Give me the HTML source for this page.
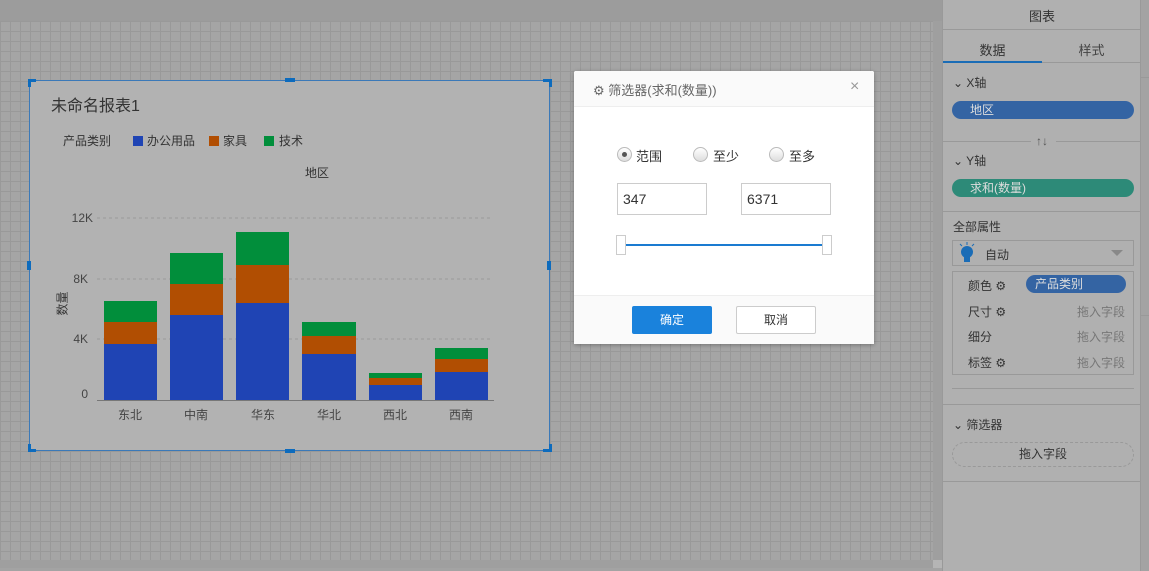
<!DOCTYPE html>
<html><head><meta charset="utf-8"><style>
*{margin:0;padding:0;box-sizing:border-box}
body{width:1149px;height:571px;overflow:hidden;background:#a3a3a3;font-family:"Liberation Sans","Noto Sans CJK SC",sans-serif;position:relative;color:#333}
.a{position:absolute}
#top{left:0;top:0;width:942px;height:21px;background:#9c9c9c}
#canvas{left:0;top:21px;width:933px;height:539px;background-color:#a5a5a5;background-image:linear-gradient(#999 1px,transparent 1px),linear-gradient(90deg,#999 1px,transparent 1px);background-size:10px 10px;background-position:0 0}
#vs{left:933px;top:21px;width:9px;height:547px;background:#9f9f9f}
#hs{left:0;top:560px;width:933px;height:8px;background:#9f9f9f}
#chart{left:29px;top:80px;width:521px;height:371px;background:#b2b2b2;border:1px solid #3b79b8}
.h{background:#0d6bbd;position:absolute}
.t{position:absolute;font-size:12px;color:#333;white-space:nowrap}
#side{left:942px;top:0;width:199px;height:571px;background:#b0b0b0;border-left:1px solid #999;border-right:1px solid #999}
.ln{position:absolute;height:1px;background:#999}
.pill{position:absolute;border-radius:10px;color:#ddd;font-size:12px;padding-left:18px;line-height:18px}
#dlg{left:574px;top:71px;width:300px;height:273px;background:#fff;border-radius:2px;box-shadow:0 1px 4px rgba(0,0,0,.3)}
.radio{position:absolute;width:15px;height:15px;border-radius:50%;border:1px solid #bbb;background:linear-gradient(#fff,#ddd)}
.inp{position:absolute;border:1px solid #ccc;width:90px;height:32px;font-size:14px;padding:7px 5px;color:#333}
</style></head><body>
<div id="top" class="a"></div>
<div id="canvas" class="a"></div>
<div id="vs" class="a"></div>
<div id="hs" class="a"></div>
<div class="a" style="left:933px;top:560px;width:9px;height:8px;background:#b5b5b5"></div>

<div id="chart" class="a">
<div class="t" style="left:21px;top:11px;font-size:16px">未命名报表1</div>
<div class="t" style="left:33px;top:51px">产品类别</div>
<div class="a" style="left:103px;top:55px;width:10px;height:10px;background:#1f44b4"></div>
<div class="t" style="left:117px;top:51px">办公用品</div>
<div class="a" style="left:179px;top:55px;width:10px;height:10px;background:#b14e02"></div>
<div class="t" style="left:193px;top:51px">家具</div>
<div class="a" style="left:234px;top:55px;width:10px;height:10px;background:#018e3b"></div>
<div class="t" style="left:249px;top:51px">技术</div>
<div class="t" style="left:275px;top:83px">地区</div>
<div class="t" style="left:20px;top:214px;transform:rotate(-90deg)">数量</div>
</div>
<div class="h" style="left:28px;top:79px;width:8px;height:3px"></div><div class="h" style="left:28px;top:79px;width:3px;height:8px"></div>
<div class="h" style="left:543px;top:79px;width:9px;height:3px"></div><div class="h" style="left:549px;top:79px;width:3px;height:8px"></div>
<div class="h" style="left:28px;top:449px;width:8px;height:3px"></div><div class="h" style="left:28px;top:444px;width:3px;height:8px"></div>
<div class="h" style="left:543px;top:449px;width:9px;height:3px"></div><div class="h" style="left:549px;top:444px;width:3px;height:8px"></div>
<div class="h" style="left:285px;top:78px;width:10px;height:4px"></div><div class="h" style="left:285px;top:449px;width:10px;height:4px"></div>
<div class="h" style="left:27px;top:261px;width:4px;height:9px"></div><div class="h" style="left:547px;top:261px;width:4px;height:9px"></div>

<svg class="a" style="left:0;top:0" width="560" height="460">
<g stroke="#9a9a9a" stroke-dasharray="3,3"><line x1="97" y1="218" x2="493" y2="218"/><line x1="97" y1="279" x2="493" y2="279"/><line x1="97" y1="339" x2="493" y2="339"/></g>
<g font-size="12" fill="#444" text-anchor="end" font-family="Liberation Sans"><text x="93" y="222">12K</text><text x="88" y="283">8K</text><text x="88" y="343">4K</text><text x="88" y="398">0</text></g>
<g>
<rect x="104" y="301" width="53" height="21" fill="#018e3b"/><rect x="104" y="322" width="53" height="22" fill="#b14e02"/><rect x="104" y="344" width="53" height="56" fill="#1f44b4"/>
<rect x="170" y="253" width="53" height="31" fill="#018e3b"/><rect x="170" y="284" width="53" height="31" fill="#b14e02"/><rect x="170" y="315" width="53" height="85" fill="#1f44b4"/>
<rect x="236" y="232" width="53" height="33" fill="#018e3b"/><rect x="236" y="265" width="53" height="38" fill="#b14e02"/><rect x="236" y="303" width="53" height="97" fill="#1f44b4"/>
<rect x="302" y="322" width="54" height="14" fill="#018e3b"/><rect x="302" y="336" width="54" height="18" fill="#b14e02"/><rect x="302" y="354" width="54" height="46" fill="#1f44b4"/>
<rect x="369" y="373" width="53" height="5" fill="#018e3b"/><rect x="369" y="378" width="53" height="7" fill="#b14e02"/><rect x="369" y="385" width="53" height="15" fill="#1f44b4"/>
<rect x="435" y="348" width="53" height="11" fill="#018e3b"/><rect x="435" y="359" width="53" height="13" fill="#b14e02"/><rect x="435" y="372" width="53" height="28" fill="#1f44b4"/>
</g>
<line x1="97" y1="400.5" x2="494" y2="400.5" stroke="#777"/>
<g font-size="12" fill="#444" text-anchor="middle" font-family="Liberation Sans,Noto Sans CJK SC"><text x="130" y="419">东北</text><text x="196" y="419">中南</text><text x="263" y="419">华东</text><text x="329" y="419">华北</text><text x="395" y="419">西北</text><text x="461" y="419">西南</text></g>
</svg>

<div id="side" class="a">
<div class="t" style="left:0;width:198px;text-align:center;top:6px;font-size:13px">图表</div>
<div class="ln" style="left:0;top:29px;width:198px"></div>
<div class="t" style="left:0;width:99px;text-align:center;top:40px;font-size:13px">数据</div>
<div class="t" style="left:99px;width:99px;text-align:center;top:40px;font-size:13px;color:#444">样式</div>
<div class="ln" style="left:0;top:62px;width:198px"></div>
<div class="a" style="left:0;top:61px;width:99px;height:2px;background:#1a6cb6"></div>
<div class="t" style="left:10px;top:74px">⌄ X轴</div>
<div class="pill" style="left:9px;top:101px;width:182px;background:#3464a3">地区</div>
<div class="ln" style="left:0;top:141px;width:88px"></div><div class="ln" style="left:113px;top:141px;width:85px"></div>
<div class="t" style="left:93px;top:134px;color:#555">↑↓</div>
<div class="t" style="left:10px;top:152px">⌄ Y轴</div>
<div class="pill" style="left:9px;top:179px;width:182px;background:#2d8a78">求和(数量)</div>
<div class="ln" style="left:0;top:211px;width:198px"></div>
<div class="t" style="left:10px;top:218px">全部属性</div>
<div class="a" style="left:9px;top:240px;width:182px;height:26px;border:1px solid #999"></div>
<svg class="a" style="left:15px;top:242px" width="20" height="22"><circle cx="9" cy="10" r="6" fill="#1a6cb6"/><rect x="6" y="15" width="6" height="5" fill="#1a6cb6"/><g stroke="#1a6cb6"><line x1="9" y1="0" x2="9" y2="3"/><line x1="2" y1="2" x2="4" y2="4"/><line x1="16" y1="2" x2="14" y2="4"/></g></svg>
<div class="t" style="left:42px;top:246px">自动</div>
<div class="a" style="left:168px;top:250px;border:6px solid transparent;border-top:6px solid #888"></div>
<div class="a" style="left:9px;top:271px;width:182px;height:104px;border:1px solid #999"></div>
<div class="t" style="left:25px;top:277px">颜色 ⚙</div>
<div class="pill" style="left:83px;top:275px;width:100px;background:#3464a3;padding-left:9px">产品类别</div>
<div class="t" style="left:25px;top:303px">尺寸 ⚙</div><div class="t" style="left:134px;top:303px;color:#777">拖入字段</div>
<div class="t" style="left:25px;top:328px">细分</div><div class="t" style="left:134px;top:328px;color:#777">拖入字段</div>
<div class="t" style="left:25px;top:354px">标签 ⚙</div><div class="t" style="left:134px;top:354px;color:#777">拖入字段</div>
<div class="ln" style="left:9px;top:388px;width:182px"></div>
<div class="ln" style="left:0;top:404px;width:198px"></div>
<div class="t" style="left:10px;top:416px">⌄ 筛选器</div>
<div class="a" style="left:9px;top:442px;width:182px;height:25px;border:1px dashed #999;border-radius:13px;font-size:12px;text-align:center;line-height:23px">拖入字段</div>
<div class="ln" style="left:0;top:481px;width:198px"></div>
</div>
<div class="ln" style="left:1141px;top:77px;width:8px"></div>
<div class="ln" style="left:1141px;top:315px;width:8px"></div>

<div id="dlg" class="a">
<div class="a" style="left:0;top:0;width:300px;height:36px;background:#fafafa;border-bottom:1px solid #eee;border-radius:2px 2px 0 0"></div>
<div class="t" style="left:19px;top:9px;font-size:13px;color:#666">⚙ 筛选器(求和(数量))</div>
<div class="t" style="left:276px;top:7px;font-size:16px;color:#999">×</div>
<div class="radio" style="left:43px;top:76px"><div class="a" style="left:4px;top:4px;width:5px;height:5px;border-radius:50%;background:#555"></div></div>
<div class="t" style="left:62px;top:75px;font-size:13px">范围</div>
<div class="radio" style="left:119px;top:76px"></div><div class="t" style="left:139px;top:75px;font-size:13px">至少</div>
<div class="radio" style="left:195px;top:76px"></div><div class="t" style="left:215px;top:75px;font-size:13px">至多</div>
<div class="inp" style="left:43px;top:112px">347</div>
<div class="inp" style="left:167px;top:112px">6371</div>
<div class="a" style="left:50px;top:173px;width:202px;height:2px;background:#1a7bd1"></div>
<div class="a" style="left:42px;top:164px;width:10px;height:20px;border:1px solid #ccc;background:#fff"></div>
<div class="a" style="left:248px;top:164px;width:10px;height:20px;border:1px solid #ccc;background:#fff"></div>
<div class="a" style="left:0;top:224px;width:300px;height:49px;background:#fafafa;border-top:1px solid #eee"></div>
<div class="a" style="left:58px;top:235px;width:80px;height:28px;background:#1a82dc;border-radius:2px;color:#fff;font-size:12px;text-align:center;line-height:28px">确定</div>
<div class="a" style="left:162px;top:235px;width:80px;height:28px;background:#fff;border:1px solid #ccc;border-radius:2px;font-size:12px;text-align:center;line-height:26px">取消</div>
</div>
</body></html>
